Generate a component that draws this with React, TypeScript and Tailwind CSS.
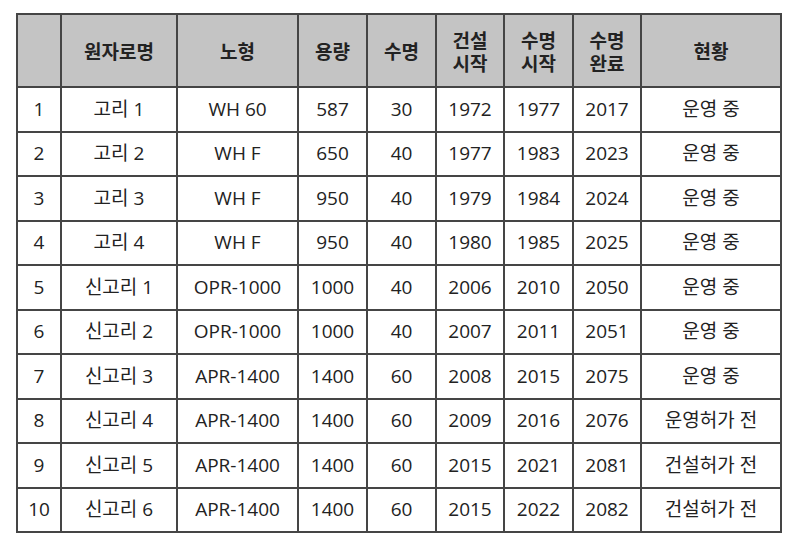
const headers: string[][] = [
  [''],
  ['원자로명'],
  ['노형'],
  ['용량'],
  ['수명'],
  ['건설', '시작'],
  ['수명', '시작'],
  ['수명', '완료'],
  ['현황'],
]

const widths = [
  'w-[44px]',
  'w-[116px]',
  'w-[121px]',
  'w-[69px]',
  'w-[69px]',
  'w-[68px]',
  'w-[69px]',
  'w-[68px]',
  'w-[140px]',
]

const rows: string[][] = [
  ['1', '고리 1', 'WH 60', '587', '30', '1972', '1977', '2017', '운영 중'],
  ['2', '고리 2', 'WH F', '650', '40', '1977', '1983', '2023', '운영 중'],
  ['3', '고리 3', 'WH F', '950', '40', '1979', '1984', '2024', '운영 중'],
  ['4', '고리 4', 'WH F', '950', '40', '1980', '1985', '2025', '운영 중'],
  ['5', '신고리 1', 'OPR-1000', '1000', '40', '2006', '2010', '2050', '운영 중'],
  ['6', '신고리 2', 'OPR-1000', '1000', '40', '2007', '2011', '2051', '운영 중'],
  ['7', '신고리 3', 'APR-1400', '1400', '60', '2008', '2015', '2075', '운영 중'],
  ['8', '신고리 4', 'APR-1400', '1400', '60', '2009', '2016', '2076', '운영허가 전'],
  ['9', '신고리 5', 'APR-1400', '1400', '60', '2015', '2021', '2081', '건설허가 전'],
  ['10', '신고리 6', 'APR-1400', '1400', '60', '2015', '2022', '2082', '건설허가 전'],
]

export default function App() {
  return (
    <div className="w-[800px] h-[540px] bg-white pt-[13px] pl-[16px] font-['Open_Sans','Noto_Sans_CJK_KR',sans-serif] text-[#222]">
      <table className="table-fixed border-collapse w-[766px]">
        <colgroup>
          {widths.map((w, i) => (
            <col key={i} className={w} />
          ))}
        </colgroup>
        <thead>
          <tr className="h-[73px] bg-[#c4c4c4]">
            {headers.map((h, i) => (
              <th
                key={i}
                className="border-2 border-[#454545] text-center align-middle font-bold text-[19px] leading-[23px] p-0 font-['Noto_Sans_CJK_KR',sans-serif]"
              >
                {h.map((line, j) => (
                  <div key={j}>{line}</div>
                ))}
              </th>
            ))}
          </tr>
        </thead>
        <tbody>
          {rows.map((r, i) => (
            <tr key={i} className="h-[44.5px]">
              {r.map((c, j) => (
                <td
                  key={j}
                  className="border-2 border-[#454545] text-center align-middle text-[19px] leading-none p-0 whitespace-nowrap"
                >
                  {c}
                </td>
              ))}
            </tr>
          ))}
        </tbody>
      </table>
    </div>
  )
}
